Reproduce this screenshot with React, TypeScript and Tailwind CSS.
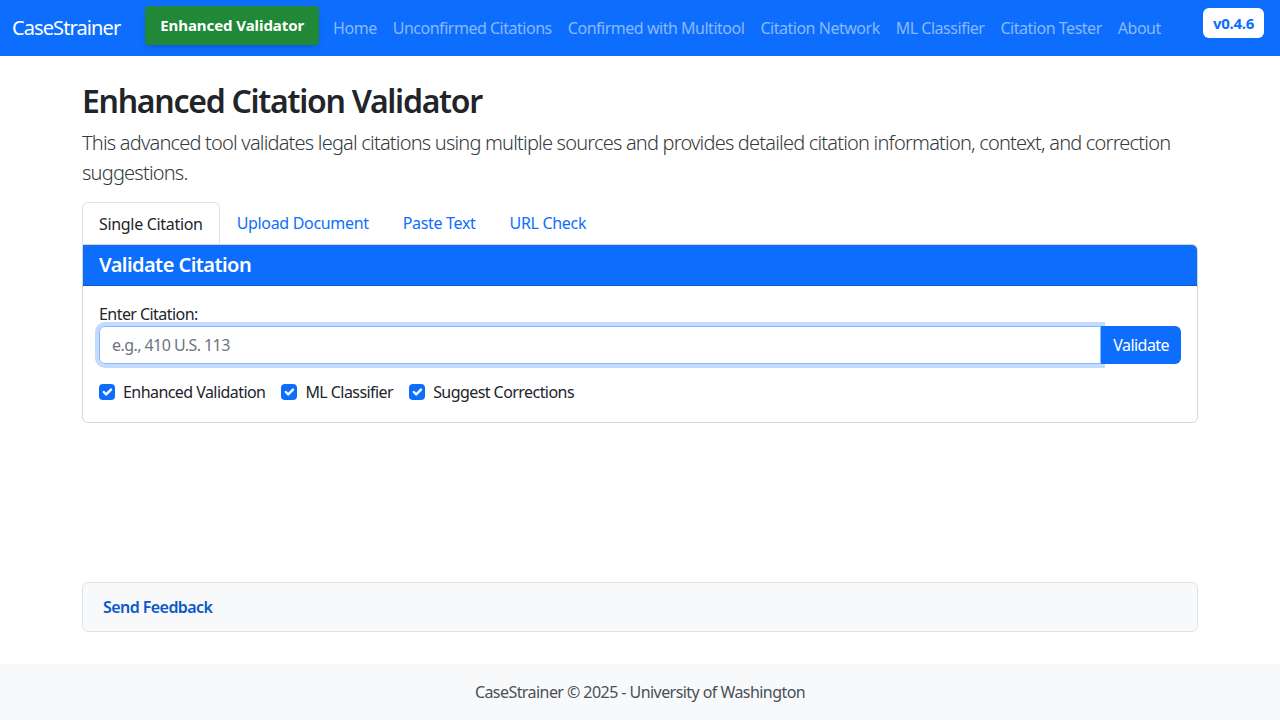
const navLinks = [
  'Home',
  'Unconfirmed Citations',
  'Confirmed with Multitool',
  'Citation Network',
  'ML Classifier',
  'Citation Tester',
  'About',
];

const tabs = ['Single Citation', 'Upload Document', 'Paste Text', 'URL Check'];

const options = ['Enhanced Validation', 'ML Classifier', 'Suggest Corrections'];

const CheckBox = () => (
  <span className="w-4 h-4 rounded-[4px] bg-[#0d6efd] flex items-center justify-center shrink-0">
    <svg viewBox="0 0 20 20" className="w-4 h-4">
      <path
        d="M6 10l3 3l6-6"
        fill="none"
        stroke="#fff"
        strokeWidth="3"
        strokeLinecap="round"
        strokeLinejoin="round"
      />
    </svg>
  </span>
);

const App = () => {
  return (
    <div className="min-h-[720px] flex flex-col bg-white text-[#212529] font-['Noto_Sans',sans-serif] tracking-[-0.035em]">
      {/* Navbar */}
      <nav className="h-14 bg-[#0d6efd] flex items-center px-3 whitespace-nowrap">
        <span className="text-white text-[20px] tracking-[-0.045em] mr-[25px]">CaseStrainer</span>
        <span className="bg-[#218838] text-white font-bold text-[15px] tracking-[-0.005em] h-[39px] px-[15px] rounded-[4px] shadow-md flex items-center -mt-[5px]">
          Enhanced Validator
        </span>
        <ul className="flex items-center ml-[6px]">
          {navLinks.map(link => (
            <li key={link} className="px-2 text-[16px] tracking-[-0.03em] text-[#8ab8fe]">
              {link}
            </li>
          ))}
        </ul>
        <span className="ml-auto mr-1 -mt-[10px] bg-white text-[#0d6efd] font-bold text-[15px] tracking-[-0.02em] rounded-[6px] h-[30px] px-[10px] flex items-center">
          v0.4.6
        </span>
      </nav>

      {/* Main */}
      <main className="w-[1116px] mx-auto pt-6">
        <h1 className="text-[32px] font-semibold leading-[1.2] tracking-[-0.04em] mt-[2px] mb-2">
          Enhanced Citation Validator
        </h1>
        <p className="text-[20px] font-light leading-[30px] tracking-[-0.04em] mb-[14px] text-[#343a40]">
          This advanced tool validates legal citations using multiple sources and provides detailed citation
          information, context, and correction suggestions.
        </p>

        {/* Tabs */}
        <div className="flex tracking-[-0.02em]">
          {tabs.map((tab, i) => (
            <div
              key={tab}
              className={
                i === 0
                  ? 'px-4 h-[42px] flex items-center border border-[#dee2e6] border-b-0 rounded-t-[6px] bg-white text-[#212529] text-[16px]'
                  : 'px-[17px] h-[42px] flex items-center text-[#0d6efd] text-[16px]'
              }
            >
              {tab}
            </div>
          ))}
        </div>

        {/* Card */}
        <div className="border border-[#d3d6d9] rounded-b-[6px] rounded-tr-[6px] overflow-hidden">
          <div className="bg-[#0d6efd] h-[41px] px-4 flex items-center border-b border-[#0a58ca]">
            <h5 className="text-white text-[20px] font-semibold">Validate Citation</h5>
          </div>
          <div className="px-4 pt-[17px] pb-[18px]">
            <label className="block text-[16px] leading-[22px] mb-px">Enter Citation:</label>
            <div className="flex">
              <div className="flex-1 h-[38px] border border-[#86b7fe] rounded-l-[6px] shadow-[0_0_0_4px_rgba(13,110,253,0.25)] flex items-center px-3 text-[16px] text-[#6c757d]">
                e.g., 410 U.S. 113
              </div>
              <span className="h-[38px] bg-[#0d6efd] text-white text-[16px] px-3 rounded-r-[6px] flex items-center">
                Validate
              </span>
            </div>
            <div className="flex items-center mt-4 gap-4">
              {options.map(opt => (
                <div key={opt} className="flex items-center gap-2 text-[16px] leading-6">
                  <CheckBox />
                  <span>{opt}</span>
                </div>
              ))}
            </div>
          </div>
        </div>

        {/* Feedback */}
        <div className="mt-[159px] h-[50px] bg-[#f8f9fa] border border-[#dee2e6] rounded-[6px] flex items-center px-5">
          <span className="text-[#0a58ca] font-semibold text-[16px]">Send Feedback</span>
        </div>
      </main>

      {/* Footer */}
      <footer className="mt-auto h-14 bg-[#f8f9fa] flex items-center justify-center text-[16px] text-[#495057]">
        CaseStrainer © 2025 - University of Washington
      </footer>
    </div>
  );
};

export default App;
